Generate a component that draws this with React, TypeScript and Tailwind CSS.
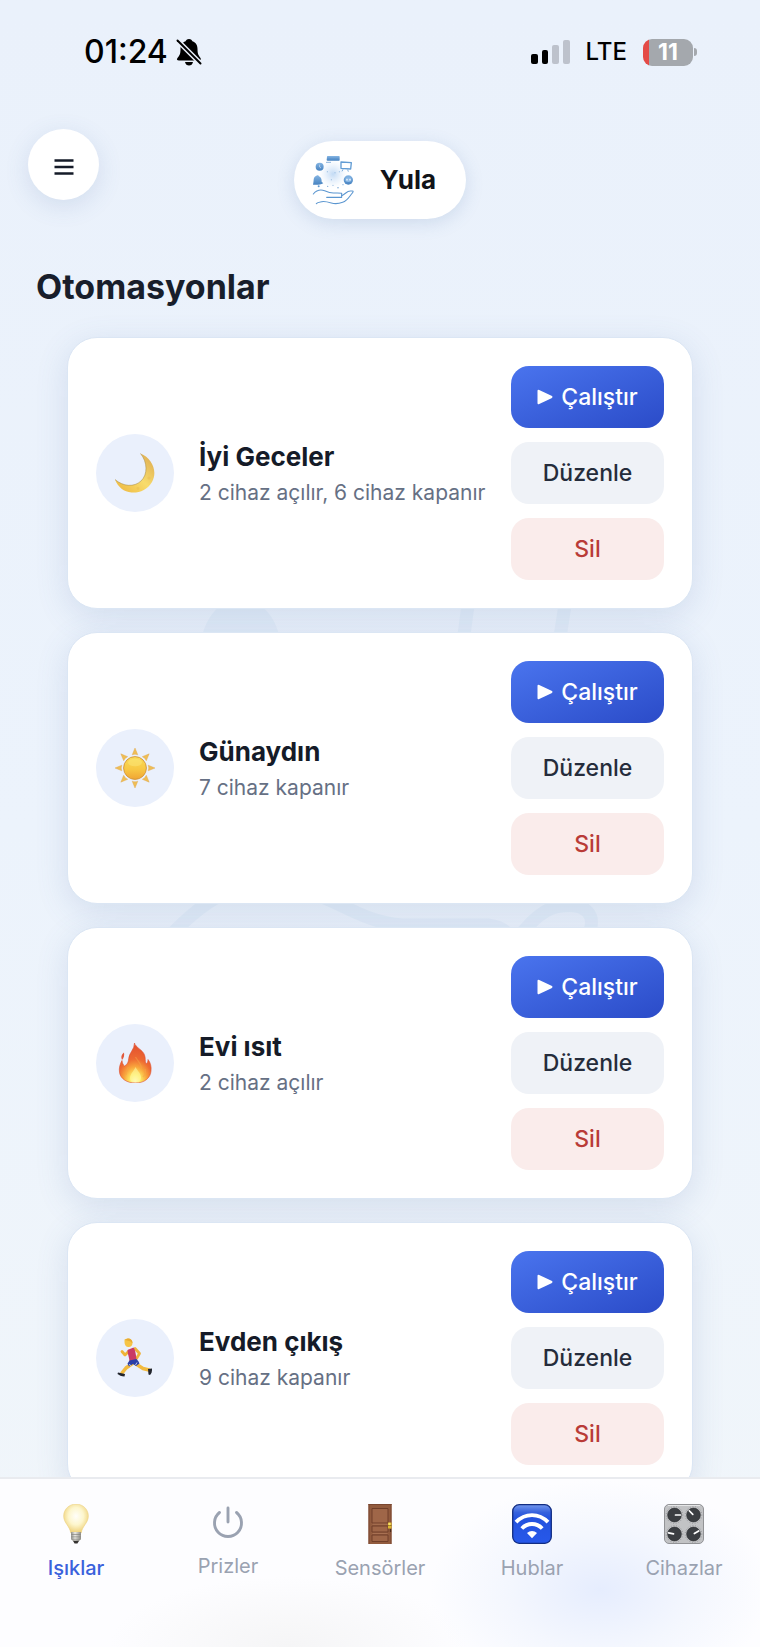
import type { ReactNode } from "react";

function MoonIcon() {
  return (
    <svg viewBox="0 0 40 40" className="size-10" aria-hidden="true">
      <defs>
        <linearGradient id="moon" x1="0.2" y1="0.9" x2="0.9" y2="0.2">
          <stop offset="0" stopColor="#f0c04a" />
          <stop offset="0.5" stopColor="#f8dc6c" />
          <stop offset="1" stopColor="#e3b657" />
        </linearGradient>
      </defs>
      <path
        d="M25.5.5C37 5 43 18.500 37 29c-4.500 8-12.500 11-20.500 10.500C9 39 3 34 0 26.500 8 33.500 19 34.500 26 28 33 21.500 32.500 9 25.500.5Z"
        fill="url(#moon)"
      />
      <path d="M0 26.500C8 33.500 19 34.500 26 28 33 21.500 32.500 9 25.500.5" fill="none" stroke="#a98d4c" strokeWidth="0.8" opacity="0.7" />
      <circle cx="34" cy="25" r="1.600" fill="#e5b548" opacity="0.35" />
      <circle cx="23" cy="35.500" r="1.400" fill="#e5b548" opacity="0.35" />
    </svg>
  );
}

function SunIcon() {
  return (
    <svg viewBox="0 0 40 40" className="size-10" aria-hidden="true">
      <defs>
        <linearGradient id="sun" x1="0" y1="0" x2="0" y2="1">
          <stop offset="0" stopColor="#f9dc58" />
          <stop offset="0.55" stopColor="#f8c844" />
          <stop offset="1" stopColor="#f0a534" />
        </linearGradient>
      </defs>
      {[0, 45, 90, 135, 180, 225, 270, 315].map((angle) => (
        <path key={angle} d="M20 0 22.800 6.800Q20 5.600 17.200 6.800Z" fill="#efbd55" stroke="#dda648" strokeWidth="0.4" transform={`rotate(${angle} 20 20)`} />
      ))}
      <circle cx="20" cy="20" r="11.400" fill="url(#sun)" stroke="#d1953b" strokeWidth="0.9" />
      <ellipse cx="20" cy="14.500" rx="7" ry="3.800" fill="#fdee86" opacity="0.4" />
    </svg>
  );
}

function FireIcon() {
  return (
    <svg viewBox="0 0 40 40" className="size-10" aria-hidden="true">
      <defs>
        <radialGradient id="fire" cx="0.5" cy="0.95" r="0.85">
          <stop offset="0" stopColor="#fffbd0" />
          <stop offset="0.2" stopColor="#fdea62" />
          <stop offset="0.42" stopColor="#f9a63c" />
          <stop offset="0.65" stopColor="#ee6a32" />
          <stop offset="1" stopColor="#e4552f" />
        </radialGradient>
      </defs>
      <path
        d="M19.500 0C20 4 28 7 29.500 12c1.300 3 .2 6 1.500 9 1.500-1 2-2.500 2-4.500 2.500 3 3.500 7 3 11.500C35.500 35 29.500 40 20.500 40 11.500 40 5.500 35.500 4.500 29.500 3.800 25 5 21 7 17.500c.3 2.500 1 4.500 2.500 5.500 3-1.500 4-4 4.200-7.500C14 10 19.500 6.500 19.500 0Z"
        fill="url(#fire)"
        stroke="#dd4e30"
        strokeWidth="0.6"
      />
      <path d="M20.500 14c2 4 6 6 6 12M13.500 24c-2 3-3 4.500-2.500 8M30 26c1 3 0 6-2 8" fill="none" stroke="#f5a348" strokeWidth="1.300" opacity="0.5" />
      <path d="M20.500 24c2 4 6 7 5.500 11-.3 3-2.500 4-5.500 4s-5.500-1-5.500-4c0-4 4-7 5.500-11Z" fill="#fff9a0" opacity="0.6" />
      <path d="M9 9.500C6 12 6 14 7 17c2-2.500 2.500-4.500 2-7.500Z" fill="#e2583a" />
    </svg>
  );
}

function RunnerIcon() {
  return (
    <svg viewBox="0 0 40 40" className="size-10" aria-hidden="true">
      <g fill="none" strokeLinecap="round" strokeLinejoin="round">
        <path d="M14 13 10 17 7 13.500" stroke="#f0b437" strokeWidth="2.800" />
        <path d="m18 25-7 5-4 5" stroke="#f2ba3e" strokeWidth="3.600" />
        <path d="m21 26 7 4.500 6 1.500" stroke="#f2ba3e" strokeWidth="3.400" />
        <path d="m20 10.500 4.500 5-3 5" stroke="#eeb23b" strokeWidth="2.800" />
      </g>
      <path d="M9.500 1.500C13-.5 17 .5 17.500 4.500c.3 3-2 5-4.500 4.500-2.500-.4-3.500-2.500-3.500-5Z" fill="#f6c446" />
      <path d="M10 2c3-3 7.500-1.500 7.500 3-1.500-.5-2-2-3.500-2Z" fill="#e8ab31" />
      <path d="m12.500 12 6-2.500c2 2.500 2.500 8 3 12l-7 3c0-5-2-8-2-12.500Z" fill="#c93a65" />
      <path d="m14.500 22.500 7-1.500c1.500 1.500 2.500 3 3 4.500l-3.500 2.500-3-2-4 2.500-1.500-3Z" fill="#2a3ea6" />
      <path d="m14 26.500 2 1M22 24.500l-1.500 2.500" stroke="#e8ecff" strokeWidth="0.8" />
      <path d="m3 34.500 7 1.500-.5 2.500C6.500 38.500 4 37 2.500 36Z" fill="#22252d" />
      <path d="m33 31 4-.5c.3 2.500-.5 5-2 6.500l-1.500-.5Z" fill="#22252d" />
    </svg>
  );
}

function BulbIcon() {
  return (
    <svg viewBox="0 0 40 42" className="h-10 w-10" aria-hidden="true">
      <defs>
        <radialGradient id="bulb" cx="0.5" cy="0.42" r="0.6">
          <stop offset="0" stopColor="#fffefa" />
          <stop offset="0.5" stopColor="#fdf6cd" />
          <stop offset="1" stopColor="#edcd70" />
        </radialGradient>
        <linearGradient id="cap" x1="0" x2="1" y1="0" y2="0">
          <stop offset="0" stopColor="#8f8f8a" />
          <stop offset="0.4" stopColor="#ecebe5" />
          <stop offset="1" stopColor="#8d8b84" />
        </linearGradient>
      </defs>
      <path d="M20 0C27 0 33 5.500 33 12.500c0 7.500-6.500 10.500-7.500 18h-11C13.500 23 7 20 7 12.500 7 5.500 13 0 20 0Z" fill="url(#bulb)" stroke="#eacb76" strokeWidth="0.5" />
      <path d="M14.800 29.500h10.400v7.500l-2.500 2.500h-5.400L14.800 37Z" fill="url(#cap)" />
      <path d="M15 32h10M15 34.500h10M15.500 37h9" stroke="#817f79" strokeWidth="0.7" />
      <path d="M16.800 38.500h6.400L21.500 41.500h-3Z" fill="#33312f" />
    </svg>
  );
}

function PowerIcon() {
  return (
    <svg viewBox="0 0 40 38" className="h-[38px] w-10" fill="none" stroke="currentColor" strokeWidth="2.900" strokeLinecap="round" aria-hidden="true">
      <path d="M20 4v14M11.500 8.500a13.500 13.500 0 1 0 17 0" />
    </svg>
  );
}

function DoorIcon() {
  return (
    <svg viewBox="0 0 40 40" className="size-10" aria-hidden="true">
      <path fill="#925b3e" d="M8.500 0h23v40h-23z" />
      <path d="M9 0v40M31 0v40M8.500.5h23" stroke="#7a4731" />
      <g fill="#9f6648" stroke="#703f2a" strokeWidth="1">
        <path d="M12 4.500h16V19H12zM12 22h16v6H12zM12 31h16v6.500H12z" />
      </g>
      <path d="M12.500 20.200h15M12.500 29.400h15" stroke="#b17a5a" strokeWidth="0.8" />
      <path fill="#dcb732" d="M28 18.500h3.500v6H28z" />
      <path d="M28 21.500h3.500" stroke="#8a6420" strokeWidth="0.8" />
      <circle cx="29.500" cy="20" r="1.200" fill="#f8e46a" />
      <path d="M30.500 25v3" stroke="#4b2b1d" strokeWidth="1.200" />
    </svg>
  );
}

function WifiIcon() {
  return (
    <svg viewBox="0 0 40 40" className="size-10" aria-hidden="true">
      <defs>
        <linearGradient id="wifi" x1="0" x2="0" y1="0" y2="1">
          <stop offset="0" stopColor="#7397ed" />
          <stop offset="0.2" stopColor="#3561dd" />
          <stop offset="0.35" stopColor="#2353df" />
          <stop offset="1" stopColor="#2758ea" />
        </linearGradient>
      </defs>
      <rect x="0.700" y="0.700" width="38.600" height="38.600" rx="6.500" fill="url(#wifi)" stroke="#122d82" strokeWidth="1.300" />
      <g fill="none" stroke="#fff" strokeWidth="3.900">
        <path d="M4 18.200C13 8.800 27 8.800 36 18.200" />
        <path d="M9.800 24.500c5.800-6 14.600-6 20.400 0" />
      </g>
      <path d="M15 29c3-2.800 7-2.800 10 0l-5 5.200Z" fill="#fff" />
    </svg>
  );
}

const knobs = [
  { x: 10.5, y: 11, angle: 90 },
  { x: 29.5, y: 11, angle: -45 },
  { x: 10.5, y: 30, angle: -80 },
  { x: 29.5, y: 30, angle: 60 },
];

function KnobsIcon() {
  return (
    <svg viewBox="0 0 40 40" className="size-10" aria-hidden="true">
      <rect x="0.500" y="0.500" width="39" height="39" rx="4.500" fill="#c2c3c5" stroke="#929396" />
      <path d="M4 1.500h32" stroke="#e5e6e7" />
      {knobs.map((k) => (
        <g key={`${k.x}-${k.y}`}>
          <circle cx={k.x} cy={k.y} r="8.300" fill="none" stroke="#85868a" strokeWidth="0.8" strokeDasharray="0.9 1.800" />
          <circle cx={k.x} cy={k.y} r="6.900" fill="#3b3e42" stroke="#2b2d30" strokeWidth="0.6" />
          <path d={`M${k.x} ${k.y - 1}V${k.y - 6}`} stroke="#fff" strokeWidth="1.700" strokeLinecap="round" transform={`rotate(${k.angle} ${k.x} ${k.y})`} />
        </g>
      ))}
    </svg>
  );
}

function Logo() {
  return (
    <svg viewBox="97 72 129 156" className="h-[52px] w-[43px]" aria-hidden="true">
      <defs>
        <linearGradient id="logo" x1="0" y1="0" x2="0" y2="1">
          <stop offset="0" stopColor="#85b5e3" />
          <stop offset="1" stopColor="#4682c0" />
        </linearGradient>
        <radialGradient id="glow">
          <stop offset="0" stopColor="#c3dbf5" />
          <stop offset="1" stopColor="#dceafa" stopOpacity="0" />
        </radialGradient>
      </defs>
      <circle cx="160" cy="132" r="42" fill="url(#glow)" />
      <g fill="#78a6d6">
        <circle cx="143" cy="125" r="1.500" />
        <circle cx="166" cy="128" r="1.500" />
        <circle cx="179" cy="125" r="1.500" />
        <circle cx="155" cy="149" r="1.500" />
        <circle cx="144" cy="169" r="2" />
        <circle cx="160" cy="166" r="1.600" />
        <circle cx="175" cy="173" r="2.300" />
        <circle cx="190" cy="164" r="1.800" />
      </g>
      <path d="M142 80q0-2 2-2h34q2 0 2 2v10q0 2-2 2h-34q-3 0-3-2Z" fill="url(#logo)" />
      <path d="M144 88h33M139 97h15" stroke="#568fca" strokeWidth="2" />
      <circle cx="120" cy="110" r="12" fill="url(#logo)" />
      <path d="M120 104v7l4 3" fill="none" stroke="#d9e9f9" strokeWidth="2" />
      <path d="m184 96 31 2-2 19-29-2Z" fill="#fff" stroke="#629cd4" strokeWidth="4" strokeLinejoin="round" />
      <path d="m190 118-3 6m17-5 2 6" stroke="#629cd4" strokeWidth="2.500" />
      <path d="M109 138c3-4 8-3 9 1 7 3 8 9 8 16l5 5c-10 5-21 5-31 4l1-6c2-6-1-17 8-20Z" fill="url(#logo)" />
      <circle cx="117" cy="169" r="3" fill="#5f98d0" />
      <circle cx="206" cy="150" r="14" fill="url(#logo)" />
      <path d="M198 144c4-3 12-3 16 0l1 9q-9 6-18 0Z" fill="#8bb9e6" />
      <circle cx="202" cy="149" r="2.500" fill="#e8f2fc" />
      <circle cx="211" cy="149" r="2.500" fill="#e8f2fc" />
      <g fill="none" stroke="#5b96d0" strokeWidth="3.300" strokeLinecap="round" strokeLinejoin="round">
        <path d="M101 192c9-11 22-14 34-10 9 4 17 7 26 7 10 0 17-1 25 1v12h-45" />
        <path d="M186 197c11-4 15-14 26-14h6c4 0 2 4 0 6-9 10-14 23-29 28-11 4-21 6-34 2-13-4-23-7-33-3-6 1-9 2-12 5" />
      </g>
    </svg>
  );
}

function Backdrop() {
  return (
    <svg viewBox="130 400 500 620" className="pointer-events-none absolute left-1/2 top-[400px] h-[620px] w-[500px] -translate-x-1/2" fill="none" stroke="#cfe2f3" strokeWidth="13" strokeLinecap="round" opacity="0.3" aria-hidden="true">
      <path d="M240 600c34 2 44 30 46 92 2 20 8 30 20 42-40 14-92 14-132 0 14-12 18-22 20-42 4-62 14-90 46-92Z" fill="#cfe2f3" stroke="none" />
      <path d="m474 560-12 90M572 560l-14 90" />
      <path d="M162 945c40-46 76-66 118-60 54 8 74 36 122 40h86q30 4 20 30-10 16-38 16h-80" />
      <path d="M512 945c16-20 28-34 44-38 30-6 44 8 30 32-44 64-94 80-180 74" />
    </svg>
  );
}

type Automation = { name: string; detail: string; icon: ReactNode };

const automations: Automation[] = [
  { name: "İyi Geceler", detail: "2 cihaz açılır, 6 cihaz kapanır", icon: <MoonIcon /> },
  { name: "Günaydın", detail: "7 cihaz kapanır", icon: <SunIcon /> },
  { name: "Evi ısıt", detail: "2 cihaz açılır", icon: <FireIcon /> },
  { name: "Evden çıkış", detail: "9 cihaz kapanır", icon: <RunnerIcon /> },
];

const tabs = [
  { label: "Işıklar", icon: <BulbIcon />, active: true },
  { label: "Prizler", icon: <PowerIcon />, active: false },
  { label: "Sensörler", icon: <DoorIcon />, active: false },
  { label: "Hublar", icon: <WifiIcon />, active: false },
  { label: "Cihazlar", icon: <KnobsIcon />, active: false },
];

function StatusBar() {
  return (
    <div className="flex h-[104px] items-center justify-between pl-[84px] pr-[63px] text-black">
      <div className="flex items-center gap-2">
        <span className="text-[32px] font-medium leading-8">01:24</span>
        <svg viewBox="0 0 26 28" className="h-7 w-[26px]" aria-label="Sessiz">
          <path d="M13 1c2 0 3 1 3.400 2.300C20 4.500 21.500 7.500 21.500 11c0 5 1 6.500 3 9 .8 1.500 0 2.500-1.500 2.500H3C1 22.500.3 21.500 1.500 20c2-2.500 3-4 3-9 0-3.500 1.500-6.500 5.100-7.700C10 2 11 1 13 1Z" />
          <path d="M9 24h8c-.5 2.500-2 3.500-4 3.500S9.500 26.500 9 24Z" />
          <path d="m1 2 24 24" stroke="#ebf1fb" strokeWidth="5" />
          <path d="m1.500 2.500 23 23" stroke="#000" strokeWidth="2" strokeLinecap="round" />
        </svg>
      </div>
      <div className="flex items-center gap-4">
        <svg viewBox="0 0 39 26" className="h-[26px] w-[39px]" aria-label="Sinyal">
          <rect y="15" width="7" height="10" rx="2" />
          <rect x="11" y="11" width="6" height="14" rx="2" />
          <rect x="21" y="6" width="7" height="19" rx="2" fill="#bdc2cc" />
          <rect x="32" y="1" width="7" height="24" rx="2" fill="#bdc2cc" />
        </svg>
        <span className="text-[24px] font-medium leading-8">LTE</span>
        <div className="flex items-center gap-px">
          <div className="flex h-[27px] w-[50px] items-center justify-center rounded-[9px] bg-[linear-gradient(90deg,#e44b47_6px,#a4a8ad_6px)] text-[23px] font-bold leading-[27px] text-white">11</div>
          <div className="h-2 w-[3px] rounded-r-full bg-[#a4a8ad]" />
        </div>
      </div>
    </div>
  );
}

function AutomationCard({ name, detail, icon }: Automation) {
  return (
    <li className="flex items-center rounded-[30px] border border-[#dbe6f4] bg-white p-7 shadow-[0_8px_32px_rgba(80,115,170,0.16)]">
      <div className="flex size-[78px] shrink-0 items-center justify-center rounded-full bg-[#eaf0fc]">{icon}</div>
      <div className="ml-[25px] min-w-0 flex-1 pt-1">
        <h2 className="text-[26px] font-bold leading-8 text-[#151b28]">{name}</h2>
        <p className="mt-1 whitespace-nowrap text-[21px] leading-8 text-[#667084]">{detail}</p>
      </div>
      <div className="flex w-[153px] shrink-0 flex-col gap-[14px] text-[23px] font-medium">
        <button type="button" className="flex h-[62px] items-center justify-center gap-2 rounded-[18px] bg-linear-to-br from-[#4a74ee] to-[#2b4bc8] text-white">
          <svg viewBox="0 0 16 16" className="size-4" fill="currentColor" aria-hidden="true">
            <path d="M.5 2Q.5.300 2.200 1L14.500 6.800Q16.500 8 14.500 9.200L2.200 15Q.5 15.700.5 14Z" />
          </svg>
          Çalıştır
        </button>
        <button type="button" className="h-[62px] rounded-[18px] bg-[#eff2f7] text-[#252c3b]">Düzenle</button>
        <button type="button" className="h-[62px] rounded-[18px] bg-[#faeceb] text-[#b93b37]">Sil</button>
      </div>
    </li>
  );
}

export default function App() {
  return (
    <div className="relative min-h-screen overflow-hidden bg-linear-to-b from-[#eaf1fb] via-[#ecf3fc] to-[#f1f6fa] font-['Inter',sans-serif]">
      <Backdrop />
      <div className="relative">
        <StatusBar />
        <header className="mt-[25px] grid grid-cols-[1fr_auto_1fr] items-start px-7">
          <button type="button" aria-label="Menü" className="flex size-[71px] items-center justify-center rounded-full bg-white pt-1 text-[#151b28] shadow-[0_6px_24px_rgba(80,115,170,0.16)]">
            <svg viewBox="0 0 20 18" className="h-[18px] w-5" stroke="currentColor" strokeWidth="2.600" aria-hidden="true">
              <path d="M.5 2.500h19M.5 9h19M.5 15.500h19" />
            </svg>
          </button>
          <div className="mt-3 flex h-[78px] items-center rounded-full bg-white pl-[18px] pr-[30px] shadow-[0_4px_18px_rgba(80,115,170,0.18)]">
            <Logo />
            <span className="ml-[25px] text-[26px] font-bold leading-8 text-[#111318]">Yula</span>
          </div>
        </header>
        <main className="pb-32">
          <h1 className="mt-[46px] px-9 text-[34px] font-bold leading-[44px] text-[#181e2b]">Otomasyonlar</h1>
          <ul className="mt-7 flex flex-col gap-[23px] px-[67px]">
            {automations.map((item) => (
              <AutomationCard key={item.name} {...item} />
            ))}
          </ul>
        </main>
      </div>
      <nav className="fixed inset-x-0 bottom-0 grid h-[170px] grid-cols-5 items-start border-t-2 border-[#e9ebef] bg-[#fdfdff] bg-[radial-gradient(ellipse_170px_110px_at_79%_66%,#e6edfe_0%,#f4f7fe_55%,transparent_100%),radial-gradient(ellipse_180px_70px_at_38%_100%,#f5f5f6_0%,transparent_100%)] pt-[25px]">
        {tabs.map((tab) => (
          <a key={tab.label} href="#" aria-current={tab.active ? "page" : undefined} className={`flex flex-col items-center gap-[10px] text-[20px] leading-7 ${tab.active ? "font-medium text-[#3a61dc]" : "text-[#9aa2b1]"}`}>
            {tab.icon}
            {tab.label}
          </a>
        ))}
      </nav>
    </div>
  );
}
